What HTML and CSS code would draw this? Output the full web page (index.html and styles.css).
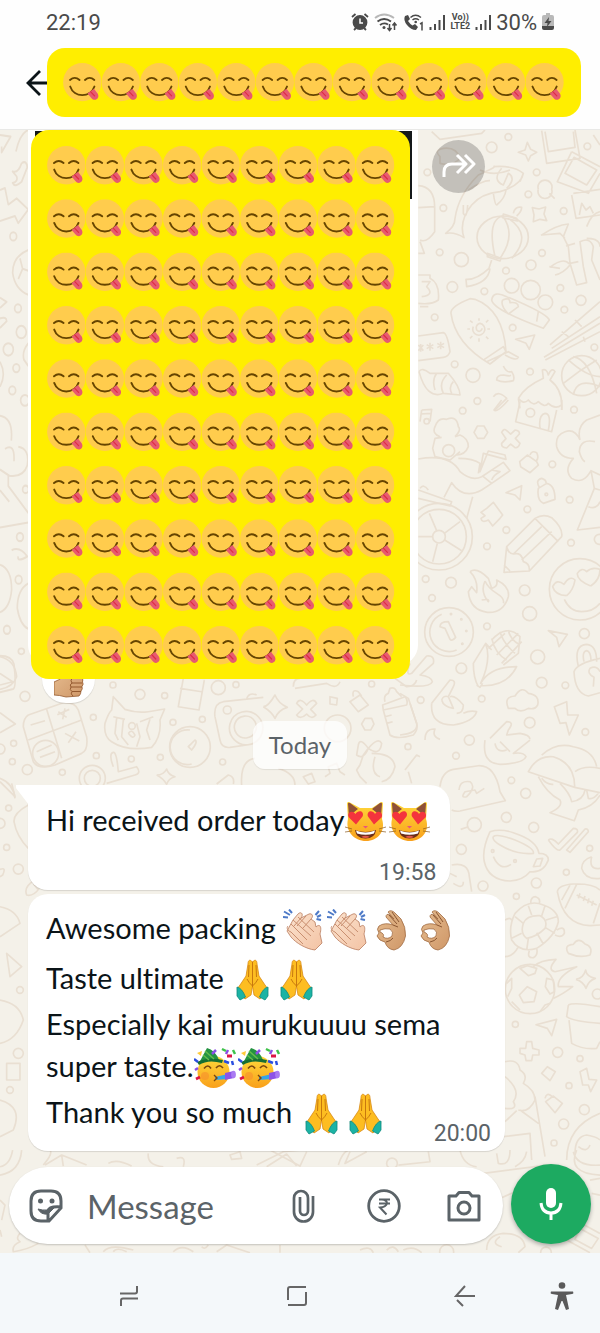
FILE: index.html
```
<!DOCTYPE html>
<html lang="en">
<head>
    <meta charset="UTF-8">
    <meta name="viewport" content="width=device-width, initial-scale=1">
    <title>Chat</title>
    <link rel="stylesheet" href="styles.css">
</head>
<body>
    <!-- shared emoji and icons -->
    <svg class="sprite" width="0" height="0" aria-hidden="true">
        <defs>
            <linearGradient id="gold" x1="0" y1="0" x2="0" y2="1">
                <stop offset="0" stop-color="#ffd93b"/>
                <stop offset="1" stop-color="#f9a01b"/>
            </linearGradient>
            <linearGradient id="pale" x1="0" y1="0" x2="1" y2="1">
                <stop offset="0" stop-color="#fbe3cf"/>
                <stop offset="1" stop-color="#f3c3a4"/>
            </linearGradient>
            <linearGradient id="tan" x1="0" y1="0" x2="1" y2="1">
                <stop offset="0" stop-color="#e6bd90"/>
                <stop offset="1" stop-color="#cf9768"/>
            </linearGradient>

            <symbol id="yum" viewBox="0 0 39 39">
                <circle cx="19.3" cy="19.2" r="19.2" fill="#ffcc4d"/>
                <g fill="none" stroke="#664500" stroke-width="1.9" stroke-linecap="round">
                    <path d="M7 17Q11.700 12.800 16.600 17M22 17Q26.700 12.800 31.400 17"/>
                    <path d="M7.200 23.600C11 35 27.500 35 31.500 23.600"/>
                </g>
                <path d="M24.500 30.600L31 25.800L34.800 30.800C37 34.500 33 38.600 29.500 36.200Z" fill="#e75a70"/>
                <path d="M27.800 29L31.600 33" stroke="#dd2e44" stroke-width="1.200" stroke-linecap="round"/>
            </symbol>

            <symbol id="cat" viewBox="0 0 44 42">
                <path d="M3 2.500Q3 .500 5 1L16 7H28L37 1Q39 .500 39 2.500L38 18C42 30 34 40 22 40S1 30 4 18Z" fill="url(#gold)"/>
                <path d="M4 3Q4 1 6 2L14 8L5 15ZM38 3Q38 1 36 2L28 8L37 15Z" fill="#8f5138"/>
                <path d="M12 23.500L5 16.500C2 12 8 8 11.500 13C14 8 21 10 18.500 15.500ZM30 23.500L24 15.500C22 10 28.500 8 31 13C34 8 40 12 37.500 16.500Z" fill="#f4343d"/>
                <path d="M19 25H24L21.500 27.500Z" fill="#e8567b"/>
                <path d="M11 29Q21.500 33 32 29Q31 37.500 21.500 37.500T11 29Z" fill="#6b2b17"/>
                <path d="M12 29.500Q21.500 33.500 31 29.500L30 32.500Q21.500 35 13 32.500Z" fill="#fff"/>
                <path d="M17 36Q21.500 33.500 26 36Q21.500 38 17 36Z" fill="#e2574c"/>
                <path d="M8 28L1 26M8 30L1 31M35 28L42 26M35 30L42 31" stroke="#8b5a1e" stroke-width=".7"/>
            </symbol>

            <symbol id="clap" viewBox="0 0 44 42">
                <path d="M1 2.500L7 6M6 .500L9 4M0 8L5 8.500M38 6L34 8M36 2L32.500 6M38 11L33.500 10" stroke="#4e7ac7" stroke-width="2"/>
                <path d="M4 22L10 11L15 5C18 2 21 5 18 9L26 5C29 4 31 7 28 10L32 13L33 18C37 14 39 18 37 25L39 34L32 41C23 40 13 34 8 28Z" fill="url(#pale)" stroke="#b97c5e" stroke-width=".8"/>
                <path d="M5 17C3 19 5 22 8 23L20 35M8 15L24 31M10 11L28 27M15 8L31 23M18 9L11 17M23 7L14 17M28 10L20 19" fill="none" stroke="#c98f70" stroke-width="1"/>
            </symbol>

            <symbol id="okhand" viewBox="0 0 44 42">
                <path d="M17 3Q20 0 24 4L30 10Q35 18 34.500 27Q32 39 23 41Q16 40 14 33Q8 32 6 27L8 24Q5 20 8 17Q14 13 22 16L15 8Q15 4 19 6L23 10Z" fill="url(#tan)" stroke="#a06a40" stroke-width=".8"/>
                <path d="M9 21Q14 19 19 20Q23 23 21 27Q17 31 12 28Q14 25 9 23Z" fill="#fff" stroke="#a06a40" stroke-width=".8"/>
                <path d="M22 16L27 18M18 6L26 15M21 3L28 13M22 29Q20 32 15 33" fill="none" stroke="#8a5632" stroke-width="1"/>
            </symbol>

            <symbol id="pray" viewBox="0 0 44 42">
                <path d="M21.500 3C19 0 17 1 17 5L15 17L9 26L6 30L14 40L20 36L21.500 27L23 36L29 40L37 30L34 26L28 17L26 5C26 1 24 0 21.500 3Z" fill="#fdbd21" stroke="#d88914" stroke-width=".8"/>
                <path d="M21.500 3V28M18 6L17.500 18M25 6L25.500 18M16 20Q18 24 21.500 27Q25 24 27 20" fill="none" stroke="#c8780e" stroke-width="1"/>
                <path d="M6 28Q11 29 14.500 38L9 41L6 37ZM37 28Q32 29 28.500 38L34 41L37 37Z" fill="#1bb3a4" stroke="#0c8b80" stroke-width=".8"/>
            </symbol>

            <symbol id="party" viewBox="0 0 44 42">
                <circle cx="19.500" cy="25" r="16" fill="url(#gold)"/>
                <path d="M5 16L13 1Q21 3 25 13Q14 12 5 16Z" fill="#259342"/>
                <path d="M3 15Q15 9 29 13L28 16Q14 12 5 18Z" fill="#176e33"/>
                <path d="M9 8L15 13M11 4L20 12" stroke="#64bd4b" stroke-width="1.500"/>
                <path d="M3 6L8 4L7 9ZM6 10L11 11" fill="#ffcb3a"/>
                <path d="M10 21.500Q14 16.500 17 21.500M22 21Q25.500 16.500 29 21" fill="none" stroke="#79450f" stroke-width="1.600"/>
                <circle cx="11" cy="29" r="4" fill="#f7902d" opacity=".6"/>
                <path d="M21 30L34 27V32L21 33Z" fill="#35a4e8"/>
                <path d="M31 26L40 24V31L31 33Z" fill="#8d53e8"/>
                <ellipse cx="39.500" cy="27.500" rx="2.400" ry="3.800" fill="#a97bf2"/>
                <path d="M20 28L23 31L20 34" fill="none" stroke="#79450f" stroke-width="1.400"/>
                <path d="M0 12L4 15M30 14L35 16M38 14L39 18" stroke="#2b4fe0" stroke-width="2.500"/>
                <path d="M18 7L22 3M1 23L4 21M32 7L34 3" stroke="#8b4fe6" stroke-width="2.500"/>
                <path d="M33 9H38M2 32L6 30" stroke="#dc1546" stroke-width="2.800"/>
                <path d="M28 2L32 4M39 3L41 7" stroke="#3fc24a" stroke-width="2.500"/>
            </symbol>

            <g id="yum-row">
                <use href="#yum" x="0" width="39" height="39"/>
                <use href="#yum" x="38.600" width="39" height="39"/>
                <use href="#yum" x="77.200" width="39" height="39"/>
                <use href="#yum" x="115.800" width="39" height="39"/>
                <use href="#yum" x="154.400" width="39" height="39"/>
                <use href="#yum" x="193" width="39" height="39"/>
                <use href="#yum" x="231.600" width="39" height="39"/>
                <use href="#yum" x="270.200" width="39" height="39"/>
                <use href="#yum" x="308.800" width="39" height="39"/>
            </g>

            <symbol id="bars" viewBox="0 0 16 16">
                <path d="M1.500 16V13M6 16V10M10.500 16V6M15 16V1" stroke="#4a4a4a" stroke-width="2"/>
            </symbol>
        </defs>
    </svg>

    <div class="status-bar">
        <span class="clock">22:19</span>
        <div class="status-icons">
            <svg width="18" height="18" viewBox="0 0 18 18" fill="none" stroke="#4a4a4a" stroke-width="1.800">
                <circle cx="9" cy="9.500" r="6.500" fill="#4a4a4a"/>
                <path d="M1 4L4.500 1M17 4L13.500 1M3 17L5 15M15 17L13 15"/>
                <path d="M9 5.500V10H12" stroke="#fff" stroke-width="1.500"/>
            </svg>
            <svg width="24" height="19" viewBox="0 0 24 19" fill="none" stroke="#4a4a4a" stroke-width="1.900">
                <path d="M1 5Q10 -2 20 5" stroke="#b8b8b8"/>
                <path d="M3.500 8.500Q10 3.500 17 8.500M6 12Q10 9 14 11.500"/>
                <circle cx="10" cy="14.500" r="1.500" fill="#4a4a4a" stroke="none"/>
                <path d="M15.500 11V17M13.500 15L15.500 17.500L17.500 15M20.500 17V10.500M18.500 12.500L20.500 10L22.500 12.500" stroke-width="1.500"/>
            </svg>
            <svg width="21" height="17" viewBox="0 0 21 17" fill="none" stroke="#4a4a4a" stroke-width="1.500">
                <path d="M2 2L5 1L7 5L5 7Q7 10 9.500 11.500L12 10L15 13L13 16Q8 16 4 11Q0 6 2 2Z" fill="#4a4a4a" stroke="none"/>
                <path d="M7.500 3.500Q12.500 -1 18 3.500M9.500 6Q12.500 3.500 16 6"/>
                <circle cx="12.700" cy="8" r="1.300" fill="#4a4a4a" stroke="none"/>
                <path d="M17 10L19 8.800V16.500"/>
            </svg>
            <svg width="16" height="16"><use href="#bars"/></svg>
            <span class="volte">Vo))<br>LTE2</span>
            <svg width="16" height="16"><use href="#bars"/></svg>
            <span class="battery-text">30%</span>
            <svg width="12" height="18" viewBox="0 0 12 18">
                <path d="M4 0H8V2H10Q12 2 12 4V13H0V4Q0 2 2 2H4Z" fill="#b9b9b9"/>
                <path d="M0 13H12V15Q12 17 10 17H2Q0 17 0 15Z" fill="#4a4a4a"/>
                <path d="M7 4L2.500 10H5.500L5 14L9.500 8H6.500Z" fill="#4a4a4a"/>
            </svg>
        </div>
    </div>

    <header class="chat-header">
        <button class="back" aria-label="Back">
            <svg width="21" height="28" viewBox="0 0 21 28" fill="none" stroke="#0b1418" stroke-width="2.800">
                <path d="M21 15H2M14 3L2 15L14 27"/>
            </svg>
        </button>
        <div class="contact-cover">
            <svg viewBox="0 0 503 39" role="img" aria-label="Contact name">
                <use href="#yum-row"/>
                <use href="#yum" x="347.400" width="39" height="39"/>
                <use href="#yum" x="386" width="39" height="39"/>
                <use href="#yum" x="424.600" width="39" height="39"/>
                <use href="#yum" x="463.200" width="39" height="39"/>
            </svg>
        </div>
    </header>

    <main class="chat">
        <!-- doodle wallpaper -->
        <svg class="wallpaper" viewBox="0 130 600 1123" preserveAspectRatio="xMidYMin slice" aria-hidden="true">
            <g transform="translate(0 130) scale(.333 .414)">
                <path d="M0 12L32 16L5 54V40M65 80Q80 72 82 90L65 125Q45 140 38 128Q55 125 50 112L38 100Q55 105 65 80M48 52Q60 8 85 0M0 145L15 140L25 180L50 165L85 192L55 225L45 208L0 220M85 290Q38 305 38 345Q45 385 85 398M60 310L68 335L85 340M68 335L55 360M0 405L20 415L0 430M0 455Q20 450 20 462L0 478M85 515Q65 535 72 555L85 570M0 560Q20 590 0 620M0 690Q40 695 34 750M15 770Q45 755 42 800M55 765Q90 770 82 810Q70 840 28 835L0 820M25 835V860L85 925M0 870L28 898M0 960L85 948M35 1015Q60 1005 82 1030Q50 1045 55 1030M0 1050Q35 1060 35 1110Q30 1155 0 1165M85 1095Q52 1110 52 1155Q60 1195 85 1205M0 1270Q35 1270 42 1290Q50 1345 40 1350L0 1358"/>
                <circle cx="40" cy="257" r="10"/><circle cx="54" cy="431" r="10"/><circle cx="64" cy="488" r="15"/><circle cx="25" cy="530" r="15"/><circle cx="49" cy="575" r="10"/><circle cx="37" cy="629" r="10"/><circle cx="75" cy="653" r="13"/><circle cx="77" cy="868" r="9"/><circle cx="60" cy="983" r="10"/><circle cx="56" cy="1086" r="10"/><circle cx="21" cy="1207" r="10"/>
            </g>
            <g transform="translate(400 110) scale(.3333)">
                <path d="M95 65L120 88L245 70L255 60M355 127L375 120L382 97L392 118L410 127L392 137L385 153L377 135ZM425 62L440 160L540 145L525 60M435 65L445 125L525 112L520 65M515 125L600 170M515 125L472 215L565 250L600 190M522 142L495 190L560 225L590 180ZM580 75L600 105M520 250L600 238M515 255L528 325L600 315M538 315L545 280L558 300L570 290L580 310"/>
                <path d="M120 140Q100 120 130 115Q170 110 180 145Q160 170 120 160ZM280 170Q340 165 370 190Q365 225 300 245Q245 250 215 285Q175 335 192 383Q165 365 137 370Q165 350 165 325Q175 255 235 195Q300 165 280 170M205 240Q250 210 270 212M305 175Q275 210 310 225L325 190Q350 205 320 235M280 250Q285 285 290 285Q315 265 318 240M190 285L190 310Q200 330 203 285M370 190L360 215M240 180Q280 200 330 180"/>
                <ellipse cx="308" cy="382" rx="77" ry="64"/><path d="M308 318Q260 330 285 440M308 318Q350 375 300 445M325 325Q400 375 335 445M310 312L350 325L352 333L308 323ZM340 310Q345 288 365 292Q365 305 350 318M262 430L303 445L300 453L262 440ZM275 450L267 475Q230 510 198 508L200 530Q265 520 270 475"/>
                <path d="M397 293L417 297L437 291L432 312L440 332L420 328L400 335L402 315ZM423 376Q470 345 505 342L490 380L505 410L510 460L530 525L560 518L550 470L540 395Q570 380 580 410L575 450L600 510M450 472Q490 440 508 462M465 495Q490 490 510 465M448 470L480 475M425 375L480 370Q500 390 490 380M498 408L525 400M510 460L535 455M560 385Q600 385 600 410M560 350Q575 310 600 305M415 238A21 21 0 1 0 455 238A21 21 0 1 0 415 238M448 250L464 266"/>
                <path d="M55 227Q105 230 104 295V365Q80 400 60 390M55 293L104 290M60 395L73 430H55M55 495H90V505Q120 520 115 570Q95 585 55 580M60 590H85M65 515H90L80 530Q105 555 65 560M320 560Q280 540 275 570Q280 600 430 655L448 630Q440 610 320 560M308 570Q330 560 330 578Q355 575 355 590L325 612Q300 585 308 570M410 635L415 605"/>
                <circle cx="335" cy="527" r="22"/><circle cx="392" cy="540" r="29"/><circle cx="436" cy="577" r="22"/>
                <path d="M210 566Q150 590 153 610Q165 700 270 762L318 725Q310 600 225 568ZM253 748L310 710L318 725M260 755L325 725L355 742Q350 755 315 735M220 650A18 18 0 1 0 240 640Q225 645 230 660Q240 670 247 655M237 625V632M237 685V695M202 657H210M262 657H270M210 632L218 638M258 680L265 687M258 637L265 630M210 685L217 678"/>
                <path d="M55 678L130 668Q142 670 150 725Q145 740 130 742L55 752M55 705L70 722M70 705L55 722M62 702V725M90 698V722M80 704L100 716M100 704L80 716M122 695V718M112 700L132 713M132 700L112 713M347 688L404 675L388 718L378 700ZM450 705L600 575M455 715L600 620M432 742L600 640M436 750L600 665M485 665L505 680M525 630L545 650M550 680L555 695"/>
                <circle cx="545" cy="797" r="60"/><path d="M505 750Q560 800 600 800M490 820Q540 780 590 750M520 740Q570 750 590 850M520 855Q530 800 600 830"/>
                <path d="M57 785Q65 770 90 790L145 790Q180 830 180 855L130 850Q80 870 57 785M110 790Q95 810 105 840M140 795Q115 820 130 850M160 815Q145 830 155 850M310 768Q320 790 335 785Q345 800 340 812Q310 820 290 810Q290 795 310 795Q335 800 330 795M355 865Q375 830 430 805L427 780Q440 775 445 795Q455 770 465 785L450 810Q490 840 485 900M355 865Q370 885 385 870Q400 890 415 875Q435 895 445 880Q465 900 485 885M355 865L360 895M280 860Q295 840 320 865L285 900"/>
                <g><circle cx="82" cy="187" r="10"/><circle cx="325" cy="81" r="10"/><circle cx="275" cy="112" r="16"/><circle cx="562" cy="109" r="10"/><circle cx="410" cy="187" r="10"/><circle cx="385" cy="253" r="10"/><circle cx="130" cy="294" r="10"/><circle cx="491" cy="303" r="10"/><circle cx="119" cy="427" r="10"/><circle cx="184" cy="449" r="21"/><circle cx="426" cy="429" r="10"/><circle cx="393" cy="465" r="15"/><circle cx="318" cy="482" r="10"/><circle cx="157" cy="531" r="16"/><circle cx="253" cy="544" r="10"/><circle cx="481" cy="534" r="10"/><circle cx="543" cy="571" r="15"/><circle cx="493" cy="599" r="10"/><circle cx="104" cy="622" r="10"/><circle cx="338" cy="653" r="10"/><circle cx="583" cy="712" r="10"/><circle cx="164" cy="763" r="10"/><circle cx="219" cy="796" r="21"/><circle cx="390" cy="785" r="10"/><circle cx="232" cy="873" r="10"/></g>
            </g>
            <g transform="translate(400 400) scale(.3333)">
                <path d="M65 30L95 28L90 65M65 30L60 65M62 42L92 40M360 5L347 65L455 95L470 30M420 85Q415 45 435 40Q455 40 445 92M305 0L282 30Q290 40 325 0M485 0V30"/><circle cx="391" cy="38" r="13"/><circle cx="80" cy="64" r="8"/>
                <path d="M120 110Q95 100 105 80Q115 50 140 58Q170 45 175 80Q185 90 165 110M125 112L105 115L98 145L105 170L150 180L180 155M165 110L180 105Q205 115 205 140Q195 165 170 165M232 78H252L263 97L252 115H233L222 97ZM305 97Q312 83 320 92L332 102L345 90Q360 92 358 102L346 115L360 130Q355 145 345 143L332 132L320 144Q303 142 305 130L318 116Z"/><circle cx="146" cy="152" r="18"/>
                <path d="M55 177Q150 160 180 215Q215 245 245 230L310 187L330 212L275 250M175 175Q220 175 240 190L235 220M240 215L250 160L318 178L315 165L265 153ZM250 230L275 250L245 270Q190 300 155 248L132 292M275 210L300 215Q280 225 275 240M55 270L155 305L150 318L55 295M60 265Q70 250 85 270M218 290L200 355M359 185L382 165L410 185L415 195L390 218L362 200ZM390 165Q395 150 410 158Q418 175 408 183M415 265Q410 300 430 310L465 298Q465 255 440 250ZM418 262Q405 240 425 235Q440 240 438 250M318 278L365 257L360 300L345 285Z"/>
                <circle cx="439" cy="283" r="4"/><circle cx="117" cy="410" r="100"/><circle cx="117" cy="410" r="82"/><circle cx="117" cy="410" r="19"/><path d="M55 410H98M88 340L110 392M180 365L133 400M185 452L134 420M98 485L112 430"/>
                <path d="M243 337L260 325L280 307L308 345L300 355L278 378L265 360Q245 370 243 355L255 347ZM320 440L405 355Q430 340 455 353Q490 385 485 410L388 513L312 517ZM405 355L475 425M425 380L340 462M455 395L365 480M320 440Q325 460 340 462Q365 455 370 485Q390 490 388 513M312 495L330 513M210 515Q230 500 265 535L275 565Q295 560 290 540Q330 560 325 590Q310 640 262 637Q210 630 205 575L215 560L230 578Q235 540 210 515M255 543Q240 575 265 605Q270 595 245 600M255 543Q265 565 290 580Q315 595 310 610"/>
                <path d="M540 120Q530 80 560 60L600 45M540 120Q525 85 495 95Q465 105 470 140Q480 175 520 175Q490 210 515 235Q550 255 573 212L600 225M585 125Q540 115 538 155Q545 180 555 185M573 212L583 265L600 270M583 265L532 390L600 382M565 320Q590 330 600 305"/>
                <circle cx="540" cy="568" r="92"/><path d="M500 587Q465 585 458 560Q470 535 492 553Q510 525 525 540Q520 570 500 587M572 558Q530 540 532 520Q545 500 560 515Q575 500 600 508Q600 540 572 558M493 598Q510 635 545 635Q580 635 600 610"/>
                <circle cx="147" cy="696" r="73"/><path d="M170 750A56 56 0 1 1 125 643M120 680Q120 665 145 665L167 712Q155 725 150 718L135 685ZM235 860Q220 835 220 790L257 730Q275 780 242 850Q270 800 350 800Q320 860 245 857M257 730L275 750M265 745L315 700M275 715Q285 760 320 780M300 695Q310 730 345 760M325 690Q330 720 360 735M355 700L290 765M365 725L305 790M275 720Q320 670 360 710L355 760L310 795M230 855L240 862L248 850"/>
                <circle cx="153" cy="642" r="2"/><circle cx="184" cy="658" r="2"/><circle cx="199" cy="693" r="2"/><circle cx="187" cy="731" r="2"/>
                <path d="M445 692L502 703L477 740L470 712ZM535 800Q520 735 560 733Q590 735 590 785M552 785Q545 755 560 752Q572 755 573 780M600 775Q530 790 522 815Q525 880 565 888L600 878M580 860L582 832Q560 820 570 805Q590 795 600 815M325 925Q310 890 345 888Q365 855 385 880Q420 885 413 915Q405 930 385 925Q360 940 345 925ZM463 920L500 905L503 945L535 945L508 1005L498 968L480 970ZM0 855Q90 865 97 845Q95 830 60 825L100 790Q105 765 80 768L35 820Q15 830 30 790M95 910L150 840Q170 840 160 860L145 890M125 900Q130 885 145 890L160 925Q130 920 125 900M150 890Q165 885 190 915Q190 940 170 940M95 910Q90 975 160 975Q220 965 230 935Q210 930 190 940M0 880L25 895L50 970Q55 1000 0 1005M75 1020Q75 985 105 987Q95 1010 120 1018M270 1015L320 965Q345 965 325 990L320 1005L360 1000Q390 1005 390 1018"/>
                <g><circle cx="188" cy="32" r="10"/><circle cx="522" cy="29" r="10"/><circle cx="457" cy="193" r="10"/><circle cx="509" cy="299" r="10"/><circle cx="382" cy="328" r="10"/><circle cx="319" cy="390" r="10"/><circle cx="261" cy="439" r="10"/><circle cx="513" cy="428" r="10"/><circle cx="598" cy="418" r="15"/><circle cx="77" cy="537" r="10"/><circle cx="153" cy="548" r="16"/><circle cx="374" cy="571" r="16"/><circle cx="96" cy="594" r="10"/><circle cx="389" cy="641" r="21"/><circle cx="261" cy="679" r="10"/><circle cx="553" cy="701" r="15"/><circle cx="413" cy="771" r="21"/><circle cx="184" cy="805" r="16"/><circle cx="425" cy="848" r="16"/><circle cx="496" cy="856" r="10"/><circle cx="245" cy="896" r="10"/><circle cx="62" cy="900" r="10"/><circle cx="389" cy="968" r="16"/><circle cx="556" cy="996" r="10"/></g>
            </g>
            <g transform="translate(0 640) scale(.3333)">
                <path d="M0 50Q45 60 50 110Q40 140 0 148M0 100L38 125L0 135M0 218L46 252L0 278M0 415Q40 430 45 475M85 225L190 188Q225 185 235 210L260 290Q265 330 245 340L165 375Q115 390 100 365L70 260Q70 235 85 225M140 208L185 355M85 300L245 240M92 255L135 242M175 215L200 232M188 238L195 205M172 224L208 208M195 280L238 303M205 308L228 275M110 335L155 315M120 352L165 335"/><circle cx="137" cy="340" r="39"/>
                <path d="M340 170L375 208Q410 220 445 215L494 207L480 240Q485 290 455 322Q380 335 335 305Q310 290 315 250Q325 220 335 210ZM340 230L375 238M420 245L460 230M350 235L345 280L355 300M370 240L365 290L385 315M410 250L420 290L410 320M450 238L440 270L450 300M385 280Q395 265 405 285Q400 300 385 280M340 380Q325 340 340 337Q350 335 355 395L410 380Q425 400 405 405L320 430M550 115L535 200L597 210L613 120M540 145L605 155M545 110L615 115"/><circle cx="396" cy="258" r="10"/><circle cx="570" cy="321" r="61"/><path d="M575 372A52 52 0 1 1 570 270M565 320L585 300Q595 305 575 330Z"/><circle cx="277" cy="415" r="39"/><circle cx="277" cy="415" r="24"/>
                <path d="M645 230Q640 190 670 185L790 172M645 230L660 300Q665 325 690 322L760 312M740 178Q745 155 770 165M790 200Q805 200 825 165Q835 190 862 202Q835 210 825 235Q815 215 790 200M690 252A50 50 0 1 0 775 230A50 50 0 0 0 690 252M705 250A33 33 0 1 0 765 245A33 33 0 0 0 705 250M725 435Q720 360 765 355M835 385Q885 400 885 435M470 405Q490 405 500 387Q505 405 525 410Q505 415 500 433Q490 415 470 405M650 432L685 405Q705 410 700 432M890 190Q900 170 920 195Q940 170 950 190L932 208L948 225Q935 240 920 222Q900 240 890 225L908 207ZM990 170L1012 175L1010 195L990 192ZM1050 185L1080 165L1105 195L1075 215ZM1060 170Q1055 145 1075 155L1085 168M1095 235H1115L1122 252L1112 270H1095L1085 252ZM1148 195L1215 170Q1225 180 1220 195L1150 210ZM1155 185Q1150 165 1165 160L1170 145Q1185 140 1190 155L1205 170M1150 210L1170 285Q1190 300 1240 285Q1255 270 1250 250L1230 190M1155 230L1175 225M1160 250L1178 245M1105 325Q1080 290 1075 315L1070 345Q1090 360 1105 325Q1135 290 1145 310Q1140 350 1105 325L1090 345L1080 375L1070 390L1080 410L1100 430M1115 340Q1180 340 1185 380Q1175 420 1145 425M1125 350Q1110 400 1140 410M1215 390L1250 345L1260 350M1225 395L1235 430M910 410L935 400L945 425L925 432ZM975 410L990 400L985 380L1010 370L1020 395L1035 405M880 140Q880 115 900 115M885 145L980 130Q1010 150 1020 125M1185 115L1220 140Q1245 140 1250 120"/>
                <circle cx="1013" cy="265" r="40"/><circle cx="682" cy="210" r="12"/>
                <g><circle cx="64" cy="34" r="9"/><circle cx="75" cy="169" r="15"/><circle cx="280" cy="232" r="9"/><circle cx="339" cy="135" r="9"/><circle cx="420" cy="163" r="15"/><circle cx="494" cy="167" r="9"/><circle cx="655" cy="143" r="21"/><circle cx="708" cy="134" r="9"/><circle cx="519" cy="247" r="9"/><circle cx="607" cy="238" r="9"/><circle cx="289" cy="347" r="9"/><circle cx="394" cy="357" r="9"/><circle cx="481" cy="352" r="9"/><circle cx="668" cy="366" r="9"/><circle cx="41" cy="310" r="9"/><circle cx="37" cy="365" r="9"/><circle cx="82" cy="389" r="15"/><circle cx="187" cy="397" r="9"/><circle cx="0" cy="327" r="15"/><circle cx="1224" cy="320" r="9"/><circle cx="1115" cy="132" r="9"/></g>
            </g>
            <g transform="translate(0 780) scale(.3333)">
                <path d="M0 5L45 50L35 10M85 75Q40 100 42 125Q50 170 85 205M0 268Q20 260 8 285L0 290M105 300Q70 320 80 345Q100 350 118 325M100 310L115 330"/><circle cx="26" cy="84" r="9"/><circle cx="0" cy="130" r="15"/><circle cx="20" cy="202" r="9"/><circle cx="55" cy="267" r="15"/>
                <path d="M0 380Q50 390 60 430L0 470M20 520L65 560L30 590ZM0 660Q60 670 70 720Q50 780 0 790M20 850H60V900H20ZM0 960Q70 980 40 1050L0 1070"/><circle cx="60" cy="630" r="10"/><circle cx="55" cy="820" r="15"/><circle cx="30" cy="930" r="10"/>
            </g>
            <g transform="translate(440 740) scale(.3333)">
                <path d="M135 0Q125 70 180 73Q250 70 258 50Q250 35 220 40L270 0M165 10Q170 40 200 30M180 5L210 35M0 140Q5 95 40 88L115 77Q165 75 180 155L196 182L60 213Q45 215 35 210M57 150Q60 120 90 125Q110 140 80 170Q60 175 75 155L105 150L110 160L133 145M265 95Q290 45 340 50Q405 70 404 142ZM305 45Q350 5 400 20Q460 30 470 80M405 95Q430 75 480 85M404 142L480 158M295 110Q320 160 360 180Q370 200 330 218L403 242L415 210Q460 200 480 165M305 115Q320 135 340 133M360 130Q390 160 395 185Q430 180 435 150M440 150L445 175Q460 180 475 160"/>
                <path d="M150 275Q125 330 133 365Q145 420 210 423Q250 420 270 395Q310 400 325 360Q325 340 297 340Q290 300 220 278Q180 265 150 275M160 290Q170 280 225 300Q285 325 280 340Q230 345 180 315Q155 300 160 290M160 350Q180 395 213 373M280 380L290 357L308 355L300 378ZM325 300Q335 290 355 312L400 265Q415 265 412 277L360 330Q350 335 325 300M380 330L435 267Q445 265 445 275L390 337ZM455 350Q425 360 425 385Q435 420 480 415M455 350Q445 390 480 385M62 268L85 260"/><circle cx="103" cy="254" r="21"/><circle cx="158" cy="333" r="4"/><circle cx="225" cy="363" r="4"/>
                <path d="M352 455Q355 435 400 432Q460 430 480 450M352 455Q370 555 450 557L480 555M390 435L365 480M410 433L375 505M410 465L470 495M420 460L415 475M435 468L430 483M447 475L443 490M460 482L455 497M480 490L460 550M35 375Q85 365 88 410L95 455M40 430Q70 450 70 425M30 400L50 410"/>
                <path d="M225 520Q265 475 310 495Q355 510 355 545Q345 590 290 625Q240 640 215 600Q205 560 225 520M250 550Q260 525 300 527Q325 540 315 565Q290 590 260 595Q240 580 250 550M272 490Q272 470 287 470Q302 475 298 490M350 570Q375 555 373 580Q365 595 345 585M268 632Q260 655 280 653Q295 645 290 625M195 540Q210 530 215 540M195 650Q220 650 235 620M225 530L250 550M265 497L275 525M315 497L305 528M350 530L318 540M345 580L315 562M310 612L290 578M260 630L265 595M215 595L245 580"/>
                <circle cx="270" cy="747" r="74"/><path d="M262 740L290 755L282 785L250 788L238 765ZM240 685L262 677L290 685L285 700L265 707ZM320 715L340 720L343 755L330 762L316 740ZM200 730L215 715V745L203 770M215 785L240 810M300 815L315 795L330 790M280 680Q300 660 348 658Q320 690 345 695L410 680Q350 710 355 740L398 740Q365 765 340 775M408 718Q430 715 437 690Q440 710 466 715Q445 722 438 745Q430 725 408 718M385 640Q370 615 400 613Q415 590 435 612Q460 620 450 645Q420 655 385 640M288 854L350 838L335 887L322 865ZM385 795Q400 785 480 800M385 795L380 830Q400 845 480 850M387 840L395 910Q430 930 470 925L480 905M260 905H275L278 925L297 930V945L278 945L275 962H258L255 945L240 940V925L257 925ZM305 1000L322 980L346 995L330 1022ZM420 995L440 985L447 1018L470 1020L452 1055L445 1035L428 1035ZM317 1085L340 1068L367 1090L345 1118ZM315 1075Q320 1055 335 1068M195 965Q235 955 240 990Q265 1005 250 1030Q285 1050 285 1080Q265 1120 235 1110M195 1010Q245 1050 220 1085Q235 1110 195 1105M285 1070L315 1250M230 1112L195 1145M240 1110L295 1150M190 1190L270 1180L275 1260M380 1260Q380 1160 480 1120M405 1240Q405 1190 440 1185Q470 1190 480 1200M415 1220Q440 1240 450 1215"/>
                <g><circle cx="48" cy="47" r="10"/><circle cx="88" cy="0" r="15"/><circle cx="214" cy="121" r="10"/><circle cx="257" cy="160" r="15"/><circle cx="199" cy="232" r="15"/><circle cx="281" cy="262" r="15"/><circle cx="64" cy="328" r="15"/><circle cx="449" cy="325" r="9"/><circle cx="379" cy="397" r="9"/><circle cx="289" cy="429" r="15"/><circle cx="129" cy="438" r="15"/><circle cx="229" cy="469" r="9"/><circle cx="472" cy="762" r="15"/><circle cx="226" cy="853" r="9"/><circle cx="353" cy="937" r="15"/><circle cx="420" cy="956" r="9"/><circle cx="387" cy="1037" r="9"/><circle cx="433" cy="1109" r="15"/><circle cx="371" cy="1152" r="15"/><circle cx="342" cy="1209" r="9"/></g>
            </g>
            <g transform="translate(0 1150) scale(.3333)">
                <path d="M0 75Q60 65 65 0M0 50Q30 45 38 0M130 45Q160 10 150 0M135 45L185 15L260 45M185 15L190 48M325 40Q350 25 395 48M445 10Q440 45 490 50M530 25Q560 15 550 50M690 15L720 5L725 25L695 28ZM770 45L850 5L900 0M800 50L860 12L890 48M0 150L15 165L5 210M0 240L5 260M60 250Q45 265 60 275Q35 285 40 305Q80 300 115 280M255 285L270 308M310 305Q330 280 400 300M340 305Q350 290 380 305M520 305Q545 280 580 305M605 290Q615 300 625 285M650 305L680 285L750 308M840 285V308"/>
            </g>
            <g transform="translate(270 1150) scale(.3333)">
                <path d="M0 0L90 48L110 5M205 45Q215 10 235 0M240 5L225 40L290 5M385 45L480 35L475 5M570 0Q580 45 620 50M680 10L685 40Q720 50 720 0M770 5Q765 35 735 50M640 70L830 45M920 0Q890 70 990 75M910 5Q920 50 990 45M650 90L680 150L735 125M960 90L990 85M965 130L990 135M270 300Q300 285 310 308M350 300Q370 280 385 305M400 300Q430 285 455 308M650 300Q650 255 700 250Q760 250 765 290L745 308M690 260Q660 280 695 290M895 270L935 220L990 250M890 270L960 308M930 235L985 265L965 295L915 268Z"/><circle cx="366" cy="40" r="16"/><circle cx="530" cy="305" r="21"/><circle cx="828" cy="307" r="16"/>
            </g>
        </svg>

        <div class="media-row">
            <div class="media-bubble">
                <div class="photo"></div>
                <div class="cover">
                    <svg viewBox="0 0 348 519" role="img" aria-label="Hidden photo">
                        <use href="#yum-row"/>
                        <use href="#yum-row" y="53.300"/>
                        <use href="#yum-row" y="106.600"/>
                        <use href="#yum-row" y="160"/>
                        <use href="#yum-row" y="213.300"/>
                        <use href="#yum-row" y="266.600"/>
                        <use href="#yum-row" y="320"/>
                        <use href="#yum-row" y="373.300"/>
                        <use href="#yum-row" y="426.600"/>
                        <use href="#yum-row" y="480"/>
                    </svg>
                </div>
            </div>
            <button class="forward" aria-label="Forward">
                <svg width="34" height="28" viewBox="0 0 34 28" fill="none" stroke="#fff" stroke-width="3" stroke-linejoin="round">
                    <path d="M2 25V20Q2 12 10 12H23M15 3L24 12L15 21M23 3L32 12L23 21"/>
                </svg>
            </button>
        </div>
        <div class="reaction">
            <svg width="30" height="30" viewBox="0 0 30 30" role="img" aria-label="Thumbs up">
                <path d="M0 14Q5 12 9 9L15 1Q20 0 18 10L27 10Q30 11 28.500 14Q30 16 28 18.500Q29 21 27 23Q27 26 25 28L12 29Q5 27 0 27Z" fill="url(#tan)" stroke="#94592f" stroke-width=".8"/>
                <path d="M18 10Q16 13 18 15H28M17 19H28M18 23.500H27M18 15Q15 17 17 19Q15 22 18 23.500Q16 26 19 28" fill="none" stroke="#94592f" stroke-width="1"/>
            </svg>
        </div>

        <div class="date">Today</div>

        <div class="message with-tail">
            <p>Hi received order today<svg class="emoji"><use href="#cat"/></svg><svg class="emoji"><use href="#cat"/></svg></p>
            <time>19:58</time>
        </div>

        <div class="message long">
            <p class="tall">Awesome packing <svg class="emoji"><use href="#clap"/></svg><svg class="emoji"><use href="#clap"/></svg><svg class="emoji"><use href="#okhand"/></svg><svg class="emoji"><use href="#okhand"/></svg></p>
            <p class="tall">Taste ultimate <svg class="emoji"><use href="#pray"/></svg><svg class="emoji"><use href="#pray"/></svg></p>
            <p>Especially kai murukuuuu sema<br>super taste.<svg class="emoji"><use href="#party"/></svg><svg class="emoji"><use href="#party"/></svg></p>
            <p class="tall">Thank you so much <svg class="emoji"><use href="#pray"/></svg><svg class="emoji"><use href="#pray"/></svg></p>
            <time>20:00</time>
        </div>

        <form class="composer">
            <div class="input-box">
                <button type="button" aria-label="Stickers">
                    <svg width="34" height="34" viewBox="0 0 34 34" fill="none" stroke="#5b6368" stroke-width="3">
                        <path d="M12 2H22Q32 2 32 12V19L20 32H12Q2 32 2 22V12Q2 2 12 2ZM32 18Q20 17 19 22V32"/>
                        <path d="M9 20Q18 23 26 18L19 25Q12 26 9 20Z" fill="#5b6368" stroke-width="1"/>
                        <circle cx="11.500" cy="12" r="2.500" fill="#5b6368" stroke="none"/>
                        <circle cx="23" cy="12" r="2.500" fill="#5b6368" stroke="none"/>
                    </svg>
                </button>
                <input type="text" placeholder="Message" aria-label="Message">
                <button type="button" aria-label="Attach">
                    <svg width="34" height="34" viewBox="0 0 34 34" fill="none" stroke="#5b6368" stroke-width="2.700">
                        <path d="M26 7V23A9 9 0 0 1 7 23V9A7 7 0 0 1 21 9V22A4 4 0 0 1 13 22V8"/>
                    </svg>
                </button>
                <button type="button" aria-label="Payment">
                    <svg width="34" height="34" viewBox="0 0 34 34" fill="none" stroke="#5b6368" stroke-width="2.800">
                        <circle cx="17" cy="17" r="15.300"/>
                        <path d="M12 10.500H23M12 14.500H23M12 10.500H15Q20 11 20 14.500Q19 18 13 18.500L19.500 25.500" stroke-width="2"/>
                    </svg>
                </button>
                <button type="button" aria-label="Camera">
                    <svg width="34" height="34" viewBox="0 0 34 34" fill="none" stroke="#5b6368" stroke-width="3" stroke-linejoin="round">
                        <path d="M2 7H9L12 3.500H22L25 7H32V31H2Z"/>
                        <circle cx="17" cy="19" r="6"/>
                    </svg>
                </button>
            </div>
            <button type="button" class="mic" aria-label="Voice message">
                <svg width="24" height="34" viewBox="0 0 24 34" fill="none" stroke="#fff" stroke-width="3">
                    <rect x="7" y="1" width="10" height="20" rx="5" fill="#fff" stroke="none"/>
                    <path d="M2 16Q3 26 12 26T22 16M12 26V33"/>
                </svg>
            </button>
        </form>
    </main>

    <nav class="nav-bar">
        <button aria-label="Recent apps">
            <svg width="20" height="22" viewBox="0 0 20 22" fill="none" stroke="#666" stroke-width="2">
                <path d="M1 8.500H16Q18 8.500 18 6.500V1M19 13.500H4Q2 13.500 2 15.500V21"/>
            </svg>
        </button>
        <button aria-label="Home">
            <svg width="20" height="20" viewBox="0 0 20 20" fill="none" stroke="#666" stroke-width="2">
                <path d="M1 14V3Q1 1 3 1H19M19 6V17Q19 19 17 19H1"/>
            </svg>
        </button>
        <button aria-label="Back">
            <svg width="22" height="22" viewBox="0 0 22 22" fill="none" stroke="#666" stroke-width="2">
                <path d="M21 11H2L11 1M3 15L9 21"/>
            </svg>
        </button>
        <button class="accessibility" aria-label="Accessibility">
            <svg width="24" height="28" viewBox="0 0 24 28" fill="#5a5a5a">
                <circle cx="12" cy="3.500" r="3.300"/>
                <path d="M1 9.500H23Q24 12 22 12L16 13L19 27L16 28L12.500 19H11.500L8 28L5 27L8 13L2 12Q0 12 1 9.500Z"/>
            </svg>
        </button>
    </nav>
</body>
</html>
```

FILE: styles.css
```
* {
    box-sizing: border-box;
}
body {
    margin: 0;
    min-height: 100vh;
    display: flex;
    flex-direction: column;
    font-family: Lato, "Noto Sans", sans-serif;
    font-variant-ligatures: none;
    background: #fefefe;
    color: #0b1418;
}
button {
    padding: 0;
    border: none;
    background: none;
    cursor: pointer;
}
svg {
    display: block;
}
p {
    margin: 0;
}
.sprite {
    position: absolute;
}

/* status bar */
.status-bar {
    display: flex;
    justify-content: space-between;
    align-items: center;
    height: 44px;
    padding: 0 46px;
    color: #4a4a4a;
    font-family: Roboto, sans-serif;
    font-size: 22px;
}
.status-icons {
    display: flex;
    align-items: center;
    gap: 5px;
}
.volte {
    font-size: 9px;
    font-weight: bold;
    line-height: 9px;
    text-align: center;
}

/* header */
.chat-header {
    display: flex;
    align-items: center;
    padding: 4px 19px 12px 26px;
    border-bottom: 1px solid #e9e9e7;
}
.contact-cover {
    flex: 1;
    padding: 15px 16px;
    border-radius: 18px;
    background: #ffee00;
}
.contact-cover svg {
    width: 100%;
}

/* chat */
.chat {
    position: relative;
    flex: 1;
    display: flex;
    flex-direction: column;
    align-items: flex-start;
    padding: 0 28px 9px;
    background: #f4f1e9;
    overflow: hidden;
}
.chat > * {
    position: relative;
}
.chat .wallpaper {
    position: absolute;
    inset: 0;
    width: 100%;
    height: 100%;
    fill: none;
    stroke: #e9dfd2;
    stroke-width: 5;
    stroke-linejoin: round;
}
.media-row {
    display: flex;
    align-items: flex-start;
    gap: 14px;
    z-index: 1;
}
.media-bubble {
    display: grid;
    width: 390px;
    margin-bottom: 14px;
    background: #fff;
    border-radius: 0 0 20px 20px;
}
.photo,
.cover {
    grid-area: 1 / 1;
}
.photo {
    height: 68px;
    margin: 1px 6px 0 7px;
    background: #14181a;
}
.cover {
    margin: 0 8px -14px 3px;
    padding: 16px 15px 14px 16px;
    border-radius: 18px;
    background: #ffee00;
}
.forward {
    display: grid;
    place-items: center;
    width: 53px;
    height: 53px;
    margin-top: 10px;
    border-radius: 50%;
    background: rgba(0, 0, 0, 0.2);
}
.reaction {
    display: grid;
    justify-items: center;
    align-items: end;
    width: 53px;
    height: 48px;
    margin: -24px 0 0 14px;
    padding-bottom: 5px;
    border-radius: 24px;
    background: #fff;
    box-shadow: 0 1px 1px rgba(0, 0, 0, 0.12);
}
.date {
    align-self: center;
    margin: 18px 0 16px;
    padding: 8px 16px;
    border-radius: 12px;
    background: rgba(255, 255, 255, 0.75);
    box-shadow: 0 1px 1px rgba(0, 0, 0, 0.08);
    color: #5b6368;
    font-size: 24px;
    line-height: 32px;
}
.message {
    padding: 14px 18px 3px;
    border-radius: 20px;
    background: #fff;
    box-shadow: 0 1px 1px rgba(0, 0, 0, 0.12);
    font-size: 29px;
    line-height: 42px;
}
.message time {
    display: block;
    margin: 18px -4px 0 0;
    color: #5b6368;
    font-family: Roboto, sans-serif;
    font-size: 23px;
    line-height: 28px;
    text-align: right;
}
.with-tail {
    border-top-left-radius: 0;
}
.with-tail::before {
    content: "";
    position: absolute;
    top: 0;
    left: -12px;
    width: 13px;
    height: 20px;
    background: #fff;
    clip-path: polygon(0 0, 100% 0, 100% 100%, 0 3px);
}
.long {
    width: 477px;
    margin: 4px 0 12px;
    padding: 9px 18px 3px;
}
.long time {
    margin-top: -17px;
}
.tall {
    line-height: 50px;
}
.emoji {
    display: inline-block;
    width: 44px;
    height: 42px;
    margin: -4px 0;
    vertical-align: -8px;
}

/* composer */
.composer {
    display: flex;
    align-items: flex-end;
    align-self: stretch;
    gap: 8px;
    margin: auto -19px 0;
}
.input-box {
    flex: 1;
    display: flex;
    align-items: center;
    gap: 46px;
    min-width: 0;
    height: 77px;
    padding: 0 22px 0 20px;
    border-radius: 39px;
    background: #fff;
    box-shadow: 0 1px 2px rgba(0, 0, 0, 0.2);
}
.input-box input {
    flex: 1;
    min-width: 0;
    margin-left: -22px;
    padding: 0;
    border: none;
    outline: none;
    background: none;
    font-family: inherit;
    font-size: 33px;
}
.input-box input::placeholder {
    color: #5b6368;
}
.mic {
    display: grid;
    place-items: center;
    width: 80px;
    height: 80px;
    border-radius: 50%;
    background: #1daa61;
    box-shadow: 0 2px 4px rgba(0, 0, 0, 0.3);
}

/* android navigation */
.nav-bar {
    display: grid;
    grid-template-columns: 10fr 10fr 10fr 3fr;
    align-items: center;
    height: 80px;
    padding: 5px 0 0 45px;
    background: #f4f8fa;
}
.nav-bar button {
    justify-self: center;
}
.nav-bar .accessibility {
    justify-self: start;
}
```
